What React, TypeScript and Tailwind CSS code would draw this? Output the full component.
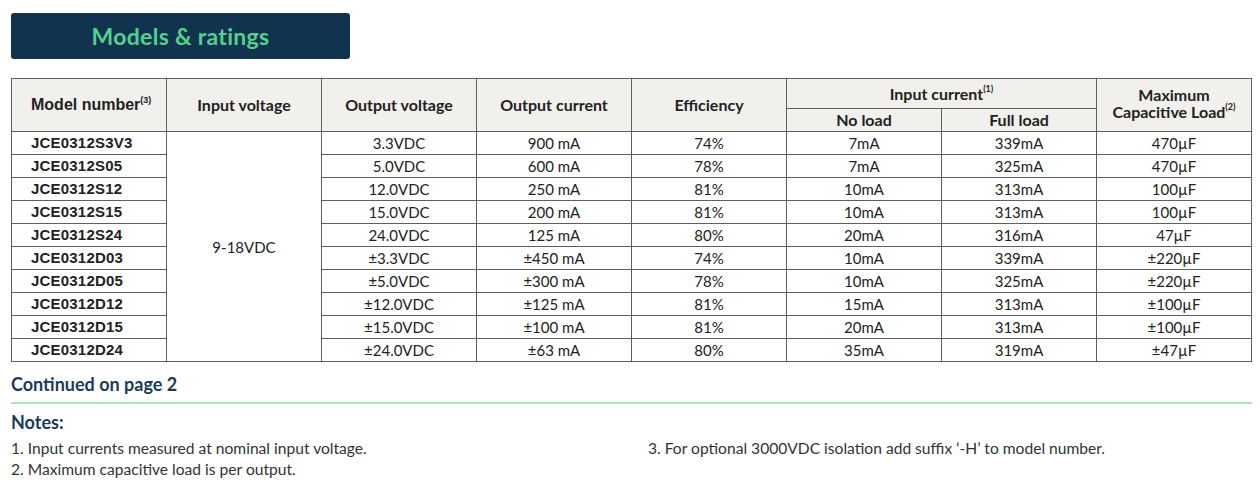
import React from "react";

const rows = [
  ["JCE0312S3V3", "3.3VDC", "900 mA", "74%", "7mA", "339mA", "470µF"],
  ["JCE0312S05", "5.0VDC", "600 mA", "78%", "7mA", "325mA", "470µF"],
  ["JCE0312S12", "12.0VDC", "250 mA", "81%", "10mA", "313mA", "100µF"],
  ["JCE0312S15", "15.0VDC", "200 mA", "81%", "10mA", "313mA", "100µF"],
  ["JCE0312S24", "24.0VDC", "125 mA", "80%", "20mA", "316mA", "47µF"],
  ["JCE0312D03", "±3.3VDC", "±450 mA", "74%", "10mA", "339mA", "±220µF"],
  ["JCE0312D05", "±5.0VDC", "±300 mA", "78%", "10mA", "325mA", "±220µF"],
  ["JCE0312D12", "±12.0VDC", "±125 mA", "81%", "15mA", "313mA", "±100µF"],
  ["JCE0312D15", "±15.0VDC", "±100 mA", "81%", "20mA", "313mA", "±100µF"],
  ["JCE0312D24", "±24.0VDC", "±63 mA", "80%", "35mA", "319mA", "±47µF"],
];

const lato = "font-['Lato','Liberation_Sans',sans-serif]";
const arial = "font-['Liberation_Sans',Arial,sans-serif]";
const th = `border border-[#5f5f5f] bg-[#f1f0ed] text-[16px] font-bold text-[#222] text-center align-middle leading-[16px] ${lato}`;
const td = `border border-[#5f5f5f] h-[23px] p-0 text-center text-[15px] leading-[20px] text-[#222] ${lato}`;

const Sup = ({ n }: { n: number }) => (
  <sup className="text-[9px] font-bold align-super relative -top-[1px]">({n})</sup>
);

const App = () => {
  return (
    <div id="models-page" className={`w-[1260px] h-[485px] bg-white overflow-hidden ${lato}`}>
      <div className="pl-[11px] pt-[13px]">
        <div
          id="models-title"
          className="w-[339px] h-[46px] rounded-[3px] bg-[#123350] flex items-center justify-center"
        >
          <h1 className="text-[23px] font-bold text-[#52d28b] tracking-[0.3px]">Models &amp; ratings</h1>
        </div>
      </div>

      <div className="pl-[11px] pt-[19px]">
        <table id="models-table" className="w-[1240px] table-fixed border-collapse">
          <colgroup>
            {Array.from({ length: 8 }).map((_, i) => (
              <col key={i} className="w-[155px]" />
            ))}
          </colgroup>
          <thead>
            <tr className="h-[30px]">
              <th rowSpan={2} className={`${th} ${arial} text-[14.5px] text-left pl-[19px]`}>
                Model number<Sup n={3} />
              </th>
              <th rowSpan={2} className={th}>Input voltage</th>
              <th rowSpan={2} className={th}>Output voltage</th>
              <th rowSpan={2} className={th}>Output current</th>
              <th rowSpan={2} className={th}>Efficiency</th>
              <th colSpan={2} className={th}>
                Input current<Sup n={1} />
              </th>
              <th rowSpan={2} className={`${th} pb-[5px] text-[15.5px]`}>
                <span className="block leading-[17px]">Maximum</span>
                <span className="block leading-[17px]">
                  Capacitive Load<Sup n={2} />
                </span>
              </th>
            </tr>
            <tr className="h-[23px]">
              <th className={th}>No load</th>
              <th className={th}>Full load</th>
            </tr>
          </thead>
          <tbody>
            {rows.map((r, i) => (
              <tr key={r[0]} id={`model-row-${r[0]}`}>
                <td className={`${td} ${arial} font-bold text-[15px] text-left pl-[19px] tracking-[0.2px]`}>{r[0]}</td>
                {i === 0 && (
                  <td rowSpan={10} className={td}>
                    9-18VDC
                  </td>
                )}
                {r.slice(1).map((v, j) => (
                  <td key={j} className={td}>
                    {v}
                  </td>
                ))}
              </tr>
            ))}
          </tbody>
        </table>
      </div>

      <div className="pl-[11px] w-[1252px]">
        <p id="continued-note" className="mt-[11px] text-[18px] font-bold text-[#1b3b58] leading-[22px]">
          Continued on page 2
        </p>
        <div className="mt-[7px] h-[2px] bg-[#ace6bf]" />
        <h2 className="mt-[7px] text-[18px] font-bold text-[#1b3b58] leading-[22px]">Notes:</h2>
        <div className="mt-[5px] grid grid-cols-[637px_1fr] text-[15.6px] text-[#333] leading-[21px]">
          <div>
            <p>1. Input currents measured at nominal input voltage.</p>
            <p>2. Maximum capacitive load is per output.</p>
          </div>
          <div>
            <p>3. For optional 3000VDC isolation add suffix ‘-H’ to model number.</p>
          </div>
        </div>
      </div>
    </div>
  );
};

export default App;
